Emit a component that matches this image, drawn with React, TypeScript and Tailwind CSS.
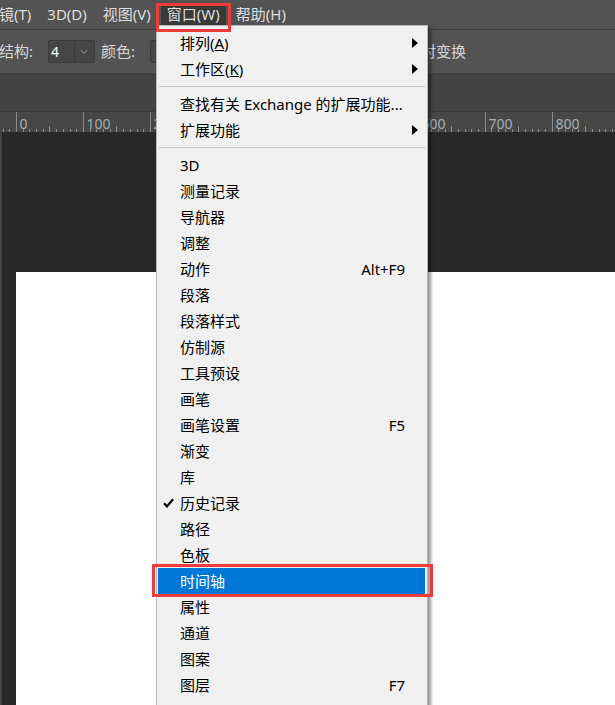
import React from "react";

const FONT = { fontFamily: '"Noto Sans", "Noto Sans CJK SC", sans-serif' };

type Item =
  | { kind: "sep" }
  | {
      kind: "item";
      label: React.ReactNode;
      shortcut?: string;
      submenu?: boolean;
      checked?: boolean;
      active?: boolean;
    };

const items: Item[] = [
  { kind: "item", label: <>排列(<u>A</u>)</>, submenu: true },
  { kind: "item", label: <>工作区(<u>K</u>)</>, submenu: true },
  { kind: "sep" },
  { kind: "item", label: "查找有关 Exchange 的扩展功能..." },
  { kind: "item", label: "扩展功能", submenu: true },
  { kind: "sep" },
  { kind: "item", label: "3D" },
  { kind: "item", label: "测量记录" },
  { kind: "item", label: "导航器" },
  { kind: "item", label: "调整" },
  { kind: "item", label: "动作", shortcut: "Alt+F9" },
  { kind: "item", label: "段落" },
  { kind: "item", label: "段落样式" },
  { kind: "item", label: "仿制源" },
  { kind: "item", label: "工具预设" },
  { kind: "item", label: "画笔" },
  { kind: "item", label: "画笔设置", shortcut: "F5" },
  { kind: "item", label: "渐变" },
  { kind: "item", label: "库" },
  { kind: "item", label: "历史记录", checked: true },
  { kind: "item", label: "路径" },
  { kind: "item", label: "色板" },
  { kind: "item", label: "时间轴", active: true },
  { kind: "item", label: "属性" },
  { kind: "item", label: "通道" },
  { kind: "item", label: "图案" },
  { kind: "item", label: "图层", shortcut: "F7" },
];

const menuBar = ["镜(T)", "3D(D)", "视图(V)", "窗口(W)", "帮助(H)"];

function Ruler() {
  const unit = 66.96;
  const origin = 16;
  const majors: number[] = [];
  for (let k = 0; k <= 8; k++) majors.push(k);
  const minors: { x: number; h: number }[] = [];
  for (let i = -3; i <= 92; i++) {
    if (i % 10 === 0) continue;
    const x = origin + (unit / 10) * i;
    if (x < 0 || x > 615) continue;
    minors.push({ x, h: Math.abs(i % 10) === 5 ? 6 : 3 });
  }
  return (
    <svg width="615" height="21" className="block">
      <rect x="0" y="0" width="615" height="21" fill="#474747" />
      <line x1="0" y1="0.5" x2="615" y2="0.5" stroke="#3a3a3a" />
      {minors.map((m, i) => (
        <line
          key={i}
          x1={Math.round(m.x) + 0.5}
          x2={Math.round(m.x) + 0.5}
          y1={21 - m.h}
          y2={21}
          stroke="#8c8c8c"
        />
      ))}
      {majors.map((k) => {
        const x = Math.round(origin + unit * k) + 0.5;
        return (
          <g key={k}>
            <line x1={x} x2={x} y1={1} y2={21} stroke="#8c8c8c" />
            <text
              x={x + 3}
              y={18}
              fill="#a8adb3"
              fontSize="14"
              style={FONT}
            >
              {k * 100}
            </text>
          </g>
        );
      })}
    </svg>
  );
}

function Arrow() {
  return (
    <svg width="6" height="10" viewBox="0 0 6 10" className="block">
      <path d="M0 0 L6 5 L0 10 Z" fill="#000" />
    </svg>
  );
}

function Check() {
  return (
    <svg width="11" height="10" viewBox="0 0 11 10" className="block">
      <path d="M1 5.2 L4 8.4 L10 1.2" fill="none" stroke="#000" strokeWidth="2.2" />
    </svg>
  );
}

export default function App() {
  return (
    <div
      className="relative flex h-[705px] w-[615px] flex-col overflow-hidden bg-[#282828]"
      style={FONT}
    >
      {/* menu bar */}
      <div className="flex h-[30px] shrink-0 items-center gap-[4px] border-b border-[#3f3f3f] bg-[#535353] text-[15px] leading-none text-[#dedede]">
        {menuBar.map((m, i) => (
          <div
            key={m}
            className={`flex h-[21px] items-center px-[6px] ${i === 0 ? "-ml-[7px]" : ""} ${
              m === "窗口(W)" ? "bg-[#393939]" : ""
            }`}
          >
            {m}
          </div>
        ))}
      </div>

      {/* options bar */}
      <div className="flex h-[44px] shrink-0 items-center border-b border-[#3e3e3e] bg-[#535353] text-[15px] leading-none text-[#d6d6d6]">
        <span className="-ml-[1px]">结构:</span>
        <div className="ml-[15px] flex h-[23px] w-[47px] items-center rounded-[2px] border border-[#3b3b3b] bg-[#464646]">
          <span className="w-[26px] pl-[2px] text-[14px] text-white">4</span>
          <span className="h-full w-px bg-[#3b3b3b]" />
          <svg width="20" height="10" viewBox="0 0 20 10" className="block">
            <path d="M6 3 L9.5 6.5 L13 3" fill="none" stroke="#9a9a9a" strokeWidth="1" />
          </svg>
        </div>
        <span className="ml-[6px]">颜色:</span>
        <div className="ml-[15px] h-[23px] w-[60px] rounded-[2px] border border-[#3b3b3b] bg-[#464646]" />
        <span className="ml-auto mr-[149px]">对变换</span>
      </div>

      {/* tab strip */}
      <div className="h-[37px] shrink-0 bg-[#434343]" />

      <Ruler />

      {/* canvas */}
      <div className="flex flex-1 border-l-2 border-[#444444] pl-[14px] pt-[140px]">
        <div className="flex-1 bg-white" />
      </div>

      {/* dropdown */}
      <div className="absolute left-[156px] top-[25px] w-[272px] border border-[#b9b9b9] bg-[#f0f0f0] pt-[4px] pb-[8px] text-[15px] leading-none text-black shadow-[3px_3px_3px_rgba(0,0,0,0.4)]">
        {items.map((it, i) =>
          it.kind === "sep" ? (
            <div key={i} className="flex h-[9px] items-center pl-[2px] pr-[2px]">
              <div className="h-[1px] flex-1 bg-[#c6c6c6]" />
            </div>
          ) : (
            <div
              key={i}
              className={`relative ml-[1px] mr-[2px] flex h-[26px] items-center pl-[22px] ${
                it.active ? "bg-[#0078d7] text-white" : ""
              }`}
            >
              {it.checked && (
                <span className="absolute left-[5px] top-[8px]">
                  <Check />
                </span>
              )}
              <span className="pt-[1px]">{it.label}</span>
              {it.shortcut && <span className="ml-auto mr-[20px] pt-[1px]">{it.shortcut}</span>}
              {it.submenu && (
                <span className="ml-auto mr-[7px]">
                  <Arrow />
                </span>
              )}
            </div>
          )
        )}
      </div>

      {/* annotations */}
      <div className="absolute left-[156px] top-[3px] h-[29px] w-[75px] border-[3px] border-[#ee3b3b]" />
      <div className="absolute left-[152px] top-[564px] h-[33px] w-[281px] border-[3px] border-[#ee3b3b]" />
    </div>
  );
}
